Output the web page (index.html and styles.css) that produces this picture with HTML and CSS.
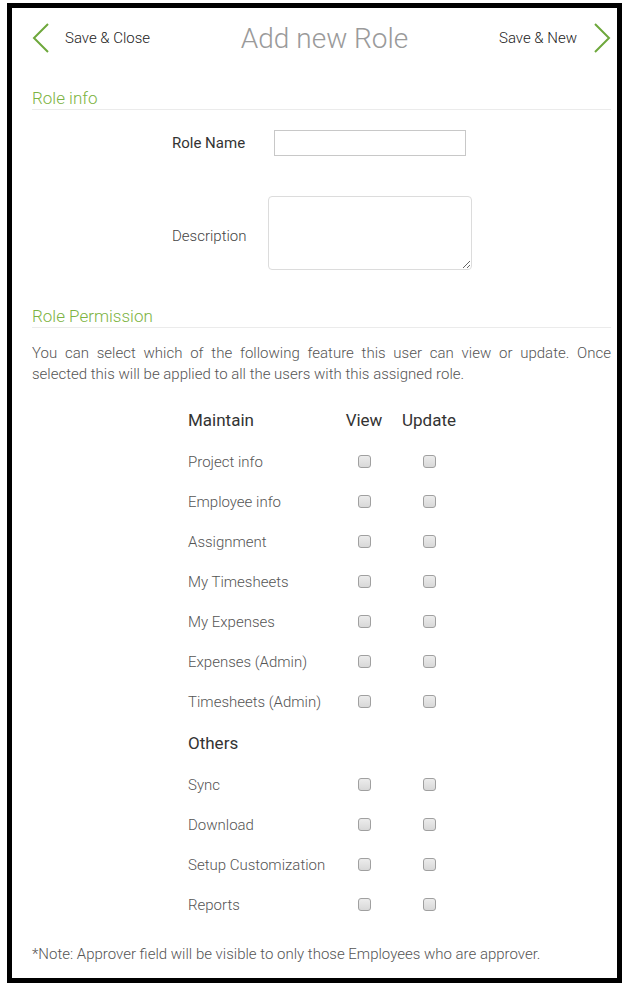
FILE: index.html
```html
<!DOCTYPE html>
<html>
<head>
<meta charset="utf-8">
<link rel="stylesheet" href="styles.css">
</head>
<body>
<div class="frame">
  <div class="header">
    <a class="nav nav-left">
      <svg class="chev" width="18" height="30" viewBox="0 0 18 30"><polyline points="16,1 2,15 16,29" fill="none" stroke="#6ea83c" stroke-width="2"/></svg>
      <span>Save &amp; Close</span>
    </a>
    <h1 class="title">Add new Role</h1>
    <a class="nav nav-right">
      <span>Save &amp; New</span>
      <svg class="chev" width="18" height="30" viewBox="0 0 18 30"><polyline points="2,1 16,15 2,29" fill="none" stroke="#6ea83c" stroke-width="2"/></svg>
    </a>
  </div>

  <div class="section-title">Role info</div>
  <div class="form-row row-name">
    <label class="form-label">Role Name</label>
    <input class="text-input" type="text">
  </div>
  <div class="form-row row-desc">
    <label class="form-label light">Description</label>
    <textarea class="text-area"></textarea>
  </div>

  <div class="section-title perm-title">Role Permission</div>
  <p class="intro">You can select which of the following feature this user can view or update. Once selected this will be applied to all the users with this assigned role.</p>

  <div class="perm">
    <div class="perm-head">
      <span class="group">Maintain</span><span class="col">View</span><span class="col">Update</span>
    </div>
    <div class="perm-row"><span class="name">Project info</span><span class="col"><input type="checkbox" class="cb"></span><span class="col"><input type="checkbox" class="cb"></span></div>
    <div class="perm-row"><span class="name">Employee info</span><span class="col"><input type="checkbox" class="cb"></span><span class="col"><input type="checkbox" class="cb"></span></div>
    <div class="perm-row"><span class="name">Assignment</span><span class="col"><input type="checkbox" class="cb"></span><span class="col"><input type="checkbox" class="cb"></span></div>
    <div class="perm-row"><span class="name">My Timesheets</span><span class="col"><input type="checkbox" class="cb"></span><span class="col"><input type="checkbox" class="cb"></span></div>
    <div class="perm-row"><span class="name">My Expenses</span><span class="col"><input type="checkbox" class="cb"></span><span class="col"><input type="checkbox" class="cb"></span></div>
    <div class="perm-row"><span class="name">Expenses (Admin)</span><span class="col"><input type="checkbox" class="cb"></span><span class="col"><input type="checkbox" class="cb"></span></div>
    <div class="perm-row"><span class="name">Timesheets (Admin)</span><span class="col"><input type="checkbox" class="cb"></span><span class="col"><input type="checkbox" class="cb"></span></div>

    <div class="perm-head others">
      <span class="group">Others</span>
    </div>
    <div class="perm-row"><span class="name">Sync</span><span class="col"><input type="checkbox" class="cb"></span><span class="col"><input type="checkbox" class="cb"></span></div>
    <div class="perm-row"><span class="name">Download</span><span class="col"><input type="checkbox" class="cb"></span><span class="col"><input type="checkbox" class="cb"></span></div>
    <div class="perm-row"><span class="name">Setup Customization</span><span class="col"><input type="checkbox" class="cb"></span><span class="col"><input type="checkbox" class="cb"></span></div>
    <div class="perm-row"><span class="name">Reports</span><span class="col"><input type="checkbox" class="cb"></span><span class="col"><input type="checkbox" class="cb"></span></div>
  </div>

  <p class="note">*Note: Approver field will be visible to only those Employees who are approver.</p>
</div>
</body>
</html>
```

FILE: styles.css
```css
html, body {
  margin: 0;
  padding: 0;
  background: #ffffff;
}
body {
  font-family: Roboto, "Liberation Sans", sans-serif;
  font-weight: 300;
  color: #444;
}
.frame {
  box-sizing: border-box;
  width: 615px;
  height: 980px;
  margin: 3px 0 0 7px;
  border: 5px solid #000;
  background: #fff;
  padding: 0 6px 0 20px;
}
.header {
  height: 60px;
  display: flex;
  align-items: center;
  justify-content: space-between;
}
.nav {
  display: flex;
  align-items: center;
  font-size: 15px;
  font-weight: 300;
  color: #222;
  cursor: pointer;
}
.nav-left .chev { margin-right: 15px; }
.nav-right .chev { margin-left: 16px; }
.title {
  margin: 0;
  font-size: 28px;
  font-weight: 300;
  color: #9a9a9a;
}
.section-title {
  margin-top: 19px;
  font-size: 17px;
  line-height: 22px;
  color: #7cb342;
  border-bottom: 1px solid #ebebeb;
}
.form-row {
  display: flex;
  align-items: center;
}
.row-name {
  margin-top: 20px;
  height: 26px;
}
.row-desc {
  margin-top: 40px;
}
.form-label {
  margin-left: 140px;
  font-size: 15px;
  font-weight: 400;
  color: #333;
}
.form-label.light {
  font-weight: 300;
  color: #444;
  position: relative;
  top: 3px;
}
.row-name .form-label { width: 102px; }
.row-desc .form-label { width: 96px; }
.text-input {
  box-sizing: border-box;
  width: 192px;
  height: 26px;
  border: 1px solid #c8c8c8;
  margin: 0;
  padding: 2px 4px;
}
.text-area {
  box-sizing: border-box;
  width: 204px;
  height: 74px;
  border: 1px solid #dcdcdc;
  border-radius: 4px;
  margin: 0;
  padding: 4px;
  resize: vertical;
}
.perm-title {
  margin-top: 35px;
}
.intro {
  margin: 15px 0 0 0;
  font-size: 15px;
  line-height: 21px;
  color: #555;
  text-align: justify;
}
.perm {
  margin-left: 156px;
}
.perm-head {
  margin-top: 23px;
  display: grid;
  grid-template-columns: 144px 64px 66px;
  font-size: 17px;
  font-weight: 400;
  line-height: 24px;
  color: #333;
  margin-bottom: 10px;
}
.perm-head.others {
  margin-top: 9px;
}
.perm-head .col, .perm-row .col {
  text-align: center;
}
.perm-row {
  display: grid;
  grid-template-columns: 144px 64px 66px;
  height: 40px;
  align-items: center;
  font-size: 15px;
  color: #555;
}
.perm-row .col {
  display: flex;
  justify-content: center;
  align-items: center;
}
.cb {
  -webkit-appearance: none;
  appearance: none;
  box-sizing: border-box;
  width: 13px;
  height: 13px;
  margin: 0 0 1px 0;
  border: 1px solid #a0a0a0;
  border-radius: 3px;
  background: linear-gradient(#ececec, #d8d8d8);
}
.note {
  margin: 19px 0 0 0;
  font-size: 15px;
  line-height: 20px;
  color: #555;
}
```
